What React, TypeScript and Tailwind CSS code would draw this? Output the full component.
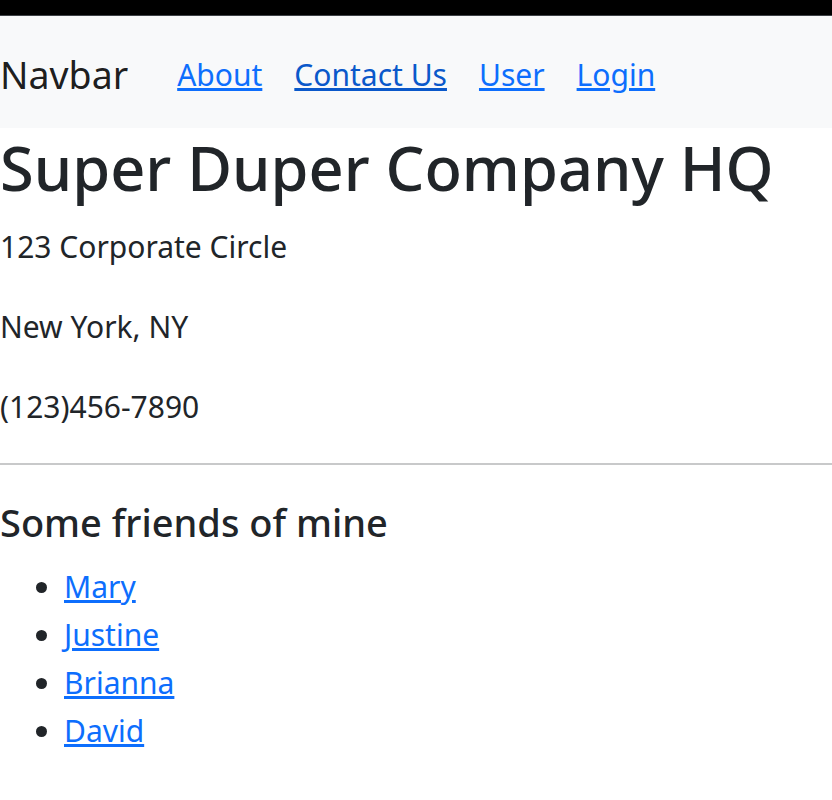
const friends = ['Mary', 'Justine', 'Brianna', 'David'];
const links = [
  { label: 'About', cls: 'text-[#0d6efd]' },
  { label: 'Contact Us', cls: 'text-[#0a58ca]' },
  { label: 'User', cls: 'text-[#0d6efd]' },
  { label: 'Login', cls: 'text-[#0d6efd]' },
];

export default function App() {
  return (
    <div className="min-h-[800px] bg-white font-['Noto_Sans',sans-serif] text-[30px] leading-[48px] text-[#212529]">
      <div className="h-[16px] border-b border-[#3d4146] bg-black" />
      <nav className="flex h-[112px] items-center bg-[#f8f9fa] pt-[6px]">
        <a className="mr-[33px] text-[37.5px] leading-[60px] text-black/90">Navbar</a>
        <ul className="flex">
          {links.map((l) => (
            <li key={l.label}>
              <a href="#" className={`px-[16px] underline ${l.cls}`}>
                {l.label}
              </a>
            </li>
          ))}
        </ul>
      </nav>
      <h1 className="mb-[16px] text-[61.3px] font-medium leading-[79px]">Super Duper Company HQ</h1>
      <p className="mb-[32px]">123 Corporate Circle</p>
      <p className="mb-[32px]">New York, NY</p>
      <p className="mb-[32px]">(123)456-7890</p>
      <hr className="my-[32px] h-0 border-t-2 border-[#c8c9ca]" />
      <h3 className="mb-[16px] text-[38px] font-medium leading-[50px]">Some friends of mine</h3>
      <ul className="list-disc pl-[64px] text-[30px]">
        {friends.map((f) => (
          <li key={f}>
            <a href="#" className="text-[#0d6efd] underline">
              {f}
            </a>
          </li>
        ))}
      </ul>
    </div>
  );
}
